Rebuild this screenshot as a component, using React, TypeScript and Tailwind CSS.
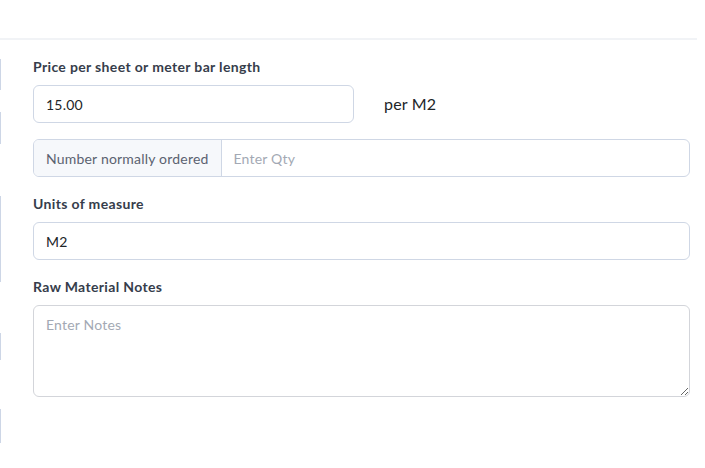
import * as React from "react"

const font = { fontFamily: "Lato, 'Noto Sans', sans-serif" }

export default function App() {
    return (
        <div className="w-[705px] h-[468px] bg-white overflow-hidden text-[14px] tracking-[0.2px]" style={font}>
            <div className="h-[38px]" />
            <div className="w-[697px] h-[2px] bg-[#f1f3f6]" />

            <div className="flex">
                {/* cut-off edges of the neighbouring column */}
                <div className="w-px flex flex-col">
                    <div className="mt-[19px] h-[31px] border-r border-[#cdd6e6]" />
                    <div className="mt-[22px] h-[32px] border-r border-[#cdd6e6]" />
                    <div className="mt-[52px] h-[86px] border-r border-[#cdd6e6]" />
                    <div className="mt-[51px] h-[27px] border-r border-[#cdd6e6]" />
                    <div className="mt-[49px] h-[34px] border-r border-[#cdd6e6]" />
                </div>

                {/* ── Form ── */}
                <div className="ml-[32px] w-[657px] pt-[16px] flex flex-col">
                    <label className="font-bold text-[#363d4b] leading-[21px] mb-[8px] tracking-[0.35px]">
                        Price per sheet or meter bar length
                    </label>
                    <div className="flex items-center">
                        <div className="w-[321px] h-[38px] border border-[#cfd7e5] rounded-[6px] px-[12px] flex items-center text-[#212529]">
                            15.00
                        </div>
                        <span className="ml-[30px] text-[16px] text-[#212529]">per M2</span>
                    </div>

                    <div className="mt-[16px] flex h-[38px] border border-[#cfd7e5] rounded-[6px] overflow-hidden">
                        <div className="bg-[#f6f8fb] border-r border-[#cfd7e5] px-[12px] flex items-center text-[#5b6270] whitespace-nowrap">
                            Number normally ordered
                        </div>
                        <div className="flex-1 px-[12px] flex items-center text-[#a3a9b4]">Enter Qty</div>
                    </div>

                    <label className="mt-[16px] font-bold text-[#363d4b] leading-[21px] mb-[8px] tracking-[0.35px]">
                        Units of measure
                    </label>
                    <div className="h-[38px] border border-[#cfd7e5] rounded-[6px] px-[12px] flex items-center text-[#212529]">
                        M2
                    </div>

                    <label className="mt-[16px] font-bold text-[#363d4b] leading-[21px] mb-[8px] tracking-[0.35px]">
                        Raw Material Notes
                    </label>
                    <textarea
                        className="h-[92px] border border-[#d3d5da] rounded-[6px] px-[12px] py-[8px] text-[#212529] tracking-[0.2px] placeholder:text-[#a3a9b4] outline-none"
                        style={font}
                        placeholder="Enter Notes"
                    />
                </div>
            </div>
        </div>
    )
}
